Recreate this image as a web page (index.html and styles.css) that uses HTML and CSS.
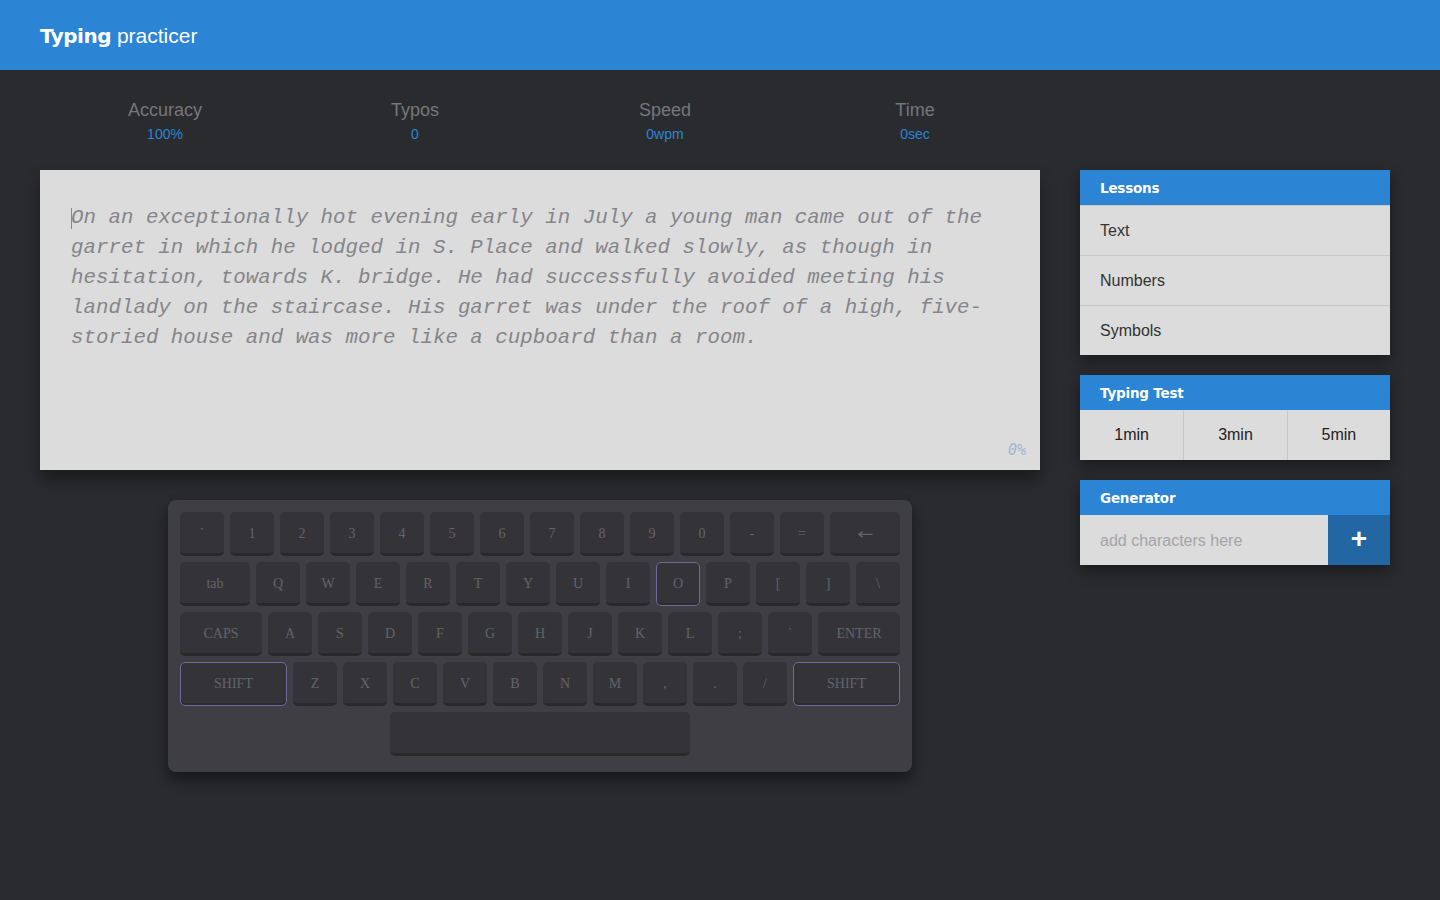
FILE: index.html
```html
<!DOCTYPE html>
<html lang="en">
<head>
<meta charset="utf-8">
<title>Typing practicer</title>
<link rel="stylesheet" href="styles.css">
</head>
<body>
<header class="topbar">
  <h1 class="brand"><b>Typing</b> practicer</h1>
</header>
<main class="page">
  <section class="stats">
    <div class="stat"><div class="stat-label">Accuracy</div><div class="stat-value">100%</div></div>
    <div class="stat"><div class="stat-label">Typos</div><div class="stat-value">0</div></div>
    <div class="stat"><div class="stat-label">Speed</div><div class="stat-value">0wpm</div></div>
    <div class="stat"><div class="stat-label">Time</div><div class="stat-value">0sec</div></div>
  </section>
  <div class="content">
    <div class="left">
      <div class="textbox">
        <p class="passage"><span class="cursor"></span>On an exceptionally hot evening early in July a young man came out of the garret in which he lodged in S. Place and walked slowly, as though in hesitation, towards K. bridge. He had successfully avoided meeting his landlady on the staircase. His garret was under the roof of a high, five-storied house and was more like a cupboard than a room.</p>
        <span class="progress">0%</span>
      </div>
      <div class="keyboard">
        <div class="row">
          <div class="key">`</div><div class="key">1</div><div class="key">2</div><div class="key">3</div><div class="key">4</div><div class="key">5</div><div class="key">6</div><div class="key">7</div><div class="key">8</div><div class="key">9</div><div class="key">0</div><div class="key">-</div><div class="key">=</div><div class="key w70"><span class="arrow">&larr;</span></div>
        </div>
        <div class="row">
          <div class="key w70">tab</div><div class="key">Q</div><div class="key">W</div><div class="key">E</div><div class="key">R</div><div class="key">T</div><div class="key">Y</div><div class="key">U</div><div class="key">I</div><div class="key active">O</div><div class="key">P</div><div class="key">[</div><div class="key">]</div><div class="key">\</div>
        </div>
        <div class="row">
          <div class="key w82">CAPS</div><div class="key">A</div><div class="key">S</div><div class="key">D</div><div class="key">F</div><div class="key">G</div><div class="key">H</div><div class="key">J</div><div class="key">K</div><div class="key">L</div><div class="key">;</div><div class="key">`</div><div class="key w82">ENTER</div>
        </div>
        <div class="row">
          <div class="key w107 active">SHIFT</div><div class="key">Z</div><div class="key">X</div><div class="key">C</div><div class="key">V</div><div class="key">B</div><div class="key">N</div><div class="key">M</div><div class="key">,</div><div class="key">.</div><div class="key">/</div><div class="key w107 active">SHIFT</div>
        </div>
        <div class="row center">
          <div class="key space"></div>
        </div>
      </div>
    </div>
    <aside class="sidebar">
      <div class="panel">
        <div class="panel-head">Lessons</div>
        <div class="list-item">Text</div>
        <div class="list-item">Numbers</div>
        <div class="list-item">Symbols</div>
      </div>
      <div class="panel">
        <div class="panel-head">Typing Test</div>
        <div class="btn-row">
          <div class="btn">1min</div>
          <div class="btn">3min</div>
          <div class="btn">5min</div>
        </div>
      </div>
      <div class="panel">
        <div class="panel-head">Generator</div>
        <div class="gen-row">
          <div class="gen-input">add characters here</div>
          <div class="gen-add">+</div>
        </div>
      </div>
    </aside>
  </div>
</main>
</body>
</html>
```
FILE: styles.css
```css
* { box-sizing: border-box; }
html, body { margin: 0; padding: 0; }
body {
  background: #2a2b2f;
  font-family: "Liberation Sans", Arial, sans-serif;
  min-height: 900px;
}
.topbar {
  height: 70px;
  background: #2b84d4;
  display: flex;
  align-items: center;
  padding: 0 40px 0 40px;
}
.brand {
  margin: 2px 0 0;
  color: #fff;
  font-size: 21px;
  font-weight: normal;
}
.brand b {
  font-family: "DejaVu Sans", sans-serif;
  font-weight: bold;
  font-size: 20px;
  letter-spacing: -0.5px;
}
.page { padding: 0 40px; }
.stats {
  width: 1000px;
  display: grid;
  grid-template-columns: repeat(4, 1fr);
  padding-top: 29px;
  height: 100px;
}
.stat { text-align: center; }
.stat-label {
  color: #76767c;
  font-size: 18px;
  line-height: 22px;
}
.stat-value {
  color: #2b84d4;
  font-size: 14px;
  line-height: 16px;
  margin-top: 5px;
}
.content {
  display: flex;
  gap: 40px;
  align-items: flex-start;
}
.left {
  width: 1000px;
  display: flex;
  flex-direction: column;
  align-items: center;
}
.textbox {
  position: relative;
  width: 1000px;
  height: 300px;
  background: #dcdcdc;
  padding: 33px 30px 0 31px;
  box-shadow: 0 10px 14px rgba(0,0,0,0.35);
}
.passage {
  margin: 0;
  font-family: "Liberation Mono", "DejaVu Sans Mono", monospace;
  font-style: italic;
  font-size: 20.8px;
  line-height: 30px;
  color: #85858a;
  width: 920px;
  position: relative;
}
.cursor {
  position: absolute;
  left: 0;
  top: 5px;
  width: 1px;
  height: 21px;
  background: #888;
}
.progress {
  position: absolute;
  right: 14px;
  bottom: 11px;
  font-family: "DejaVu Sans Mono", monospace;
  font-style: italic;
  font-size: 15px;
  color: #a4b4d0;
}
.keyboard {
  margin-top: 30px;
  width: 744px;
  background: #3e3e44;
  border-radius: 8px;
  padding: 12px 12px 16px;
  display: flex;
  flex-direction: column;
  gap: 6px;
  box-shadow: 0 8px 14px rgba(0,0,0,0.45);
}
.row {
  display: flex;
  gap: 6px;
}
.row.center { justify-content: center; }
.key {
  width: 44px;
  height: 44px;
  flex: none;
  background: #343438;
  border-radius: 5px;
  border-bottom: 3px solid #29292c;
  display: flex;
  align-items: center;
  justify-content: center;
  font-family: "Liberation Serif", "Times New Roman", serif;
  font-size: 14px;
  color: #636369;
  padding-top: 2px;
}
.arrow {
  display: inline-block;
  font-family: "DejaVu Sans", sans-serif;
  font-size: 15px;
  transform: scaleX(1.3);
}
.key.w70 { width: 70px; }
.key.w82 { width: 82px; }
.key.w107 { width: 107px; }
.key.space { width: 300px; }
.key.active {
  border: 1px solid #6e6a9c;
  padding-top: 0;
  box-shadow: inset 0 -2px 0 #2c2c30;
}
.sidebar {
  width: 310px;
  display: flex;
  flex-direction: column;
  gap: 20px;
}
.panel {
  background: #dcdcdc;
  box-shadow: 0 6px 14px rgba(0,0,0,0.4);
}
.panel-head {
  background: #2b84d4;
  color: #fff;
  font-family: "DejaVu Sans", sans-serif;
  font-weight: bold;
  font-size: 13.5px;
  letter-spacing: -0.2px;
  height: 35px;
  line-height: 36px;
  padding-left: 20px;
}
.list-item {
  height: 50px;
  line-height: 50px;
  padding-left: 20px;
  font-size: 16px;
  color: #333;
  border-top: 1px solid #c8c8c8;
}
.list-item:first-of-type { border-top: none; }
.btn-row {
  display: grid;
  grid-template-columns: 1fr 1fr 1fr;
  height: 50px;
}
.btn {
  line-height: 50px;
  text-align: center;
  font-size: 16px;
  color: #222;
  border-left: 1px solid #c8c8c8;
}
.btn:first-child { border-left: none; }
.gen-row {
  display: flex;
  height: 50px;
}
.gen-input {
  flex: 1;
  line-height: 52px;
  padding-left: 20px;
  font-size: 16px;
  color: #a4a4aa;
}
.gen-add {
  width: 62px;
  background: #2266a3;
  color: #fff;
  font-size: 28px;
  font-weight: bold;
  text-align: center;
  line-height: 48px;
}
```
